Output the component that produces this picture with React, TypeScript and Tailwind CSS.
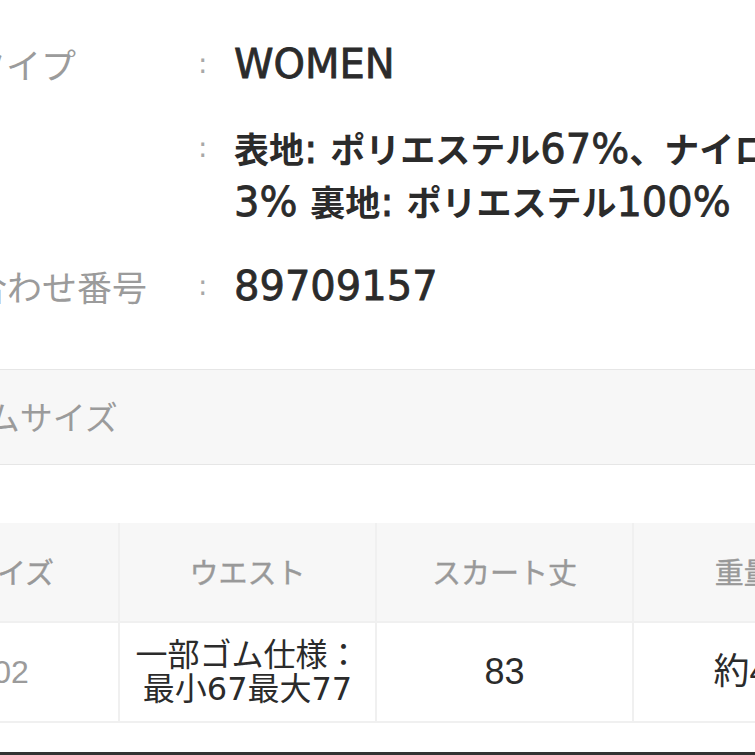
import React from 'react';

const cjk = "font-['Noto_Sans_CJK_JP',sans-serif] text-[35px] font-bold [-webkit-text-stroke:0px]";

function J({ children }: { children: React.ReactNode }) {
    return <span className={cjk}>{children}</span>;
}

interface SpecRowProps {
    label: string;
    children: React.ReactNode;
}

function SpecRow({ label, children }: SpecRowProps) {
    return (
        <div className="flex items-start">
            <div className="w-[331px] shrink-0 whitespace-nowrap font-['Noto_Sans_CJK_JP',sans-serif] text-[35px] leading-[52px] text-[#9b9b9b]">
                {label}
            </div>
            <div className="w-[36px] shrink-0 font-['DejaVu_Sans',sans-serif] text-[28px] leading-[52px] text-[#a8a8a8]">:</div>
            <div className="whitespace-nowrap font-['DejaVu_Sans','Noto_Sans_CJK_JP',sans-serif] text-[40px] leading-[52px] text-[#2b2b2b] [-webkit-text-stroke:0.8px_#2b2b2b]">
                {children}
            </div>
        </div>
    );
}

const headCell = "h-[98px] flex items-center justify-center bg-[#f7f7f7] font-['Noto_Sans_CJK_JP',sans-serif] text-[29px] text-[#999] [-webkit-text-stroke:0.4px_#999] whitespace-nowrap";
const dataCell = "h-[98px] flex items-center justify-center bg-white text-[#2b2b2b] whitespace-nowrap";

export default function App() {
    return (
        <div className="w-[755px] h-[755px] overflow-hidden bg-white flex flex-col">
            <div className="ml-[-133px] w-[1200px]">
                {/* Spec rows */}
                <div className="pt-[38px] flex flex-col gap-[32px]">
                    <SpecRow label="サイズタイプ">WOMEN</SpecRow>
                    <SpecRow label="素材">
                        <J>表地</J>: <J>ポリエステル</J>67%<J>、ナイロン</J>30%<J>、ポリウレタン</J>
                        <br />
                        3% <J>裏地</J>: <J>ポリエステル</J>100%
                    </SpecRow>
                    <SpecRow label="お問い合わせ番号">89709157</SpecRow>
                </div>

                {/* Section header */}
                <div className="mt-[57px] h-[96px] pl-[24px] border-y border-[#e6e6e6] bg-[#f7f7f7] flex items-center">
                    <span className="font-['Noto_Sans_CJK_JP',sans-serif] text-[33px] text-[#9b9b9b]">
                        アイテムサイズ
                    </span>
                </div>

                {/* Size table */}
                <div className="mt-[58px] ml-[37px] w-fit grid grid-cols-[214px_255px_255px_255px] gap-[2px] bg-[#f0f0f0] pb-[2px]">
                    <div className={headCell}>サイズ</div>
                    <div className={headCell}>ウエスト</div>
                    <div className={headCell}>スカート丈</div>
                    <div className={headCell}>
                        重量<span className="font-['Liberation_Sans',sans-serif]">(g)</span>
                    </div>

                    <div className={`${dataCell} bg-[#f7f7f7]`}>
                        <span className="font-['Liberation_Sans',sans-serif] text-[32px] text-[#9b9b9b]">02</span>
                    </div>
                    <div className={`${dataCell} flex-col`}>
                        <span className="font-['DejaVu_Sans','Noto_Sans_CJK_JP',sans-serif] text-[32px] leading-[34px] text-center">
                            一部ゴム仕様：
                            <br />
                            最小67最大77
                        </span>
                    </div>
                    <div className={dataCell}>
                        <span className="font-['Liberation_Sans',sans-serif] text-[36px]">83</span>
                    </div>
                    <div className={dataCell}>
                        <span className="font-['Liberation_Sans','Noto_Sans_CJK_JP',sans-serif] text-[36px]">約400</span>
                    </div>
                </div>
            </div>

            <div className="mt-auto h-[3px] shrink-0 bg-[#333]" />
        </div>
    );
}
